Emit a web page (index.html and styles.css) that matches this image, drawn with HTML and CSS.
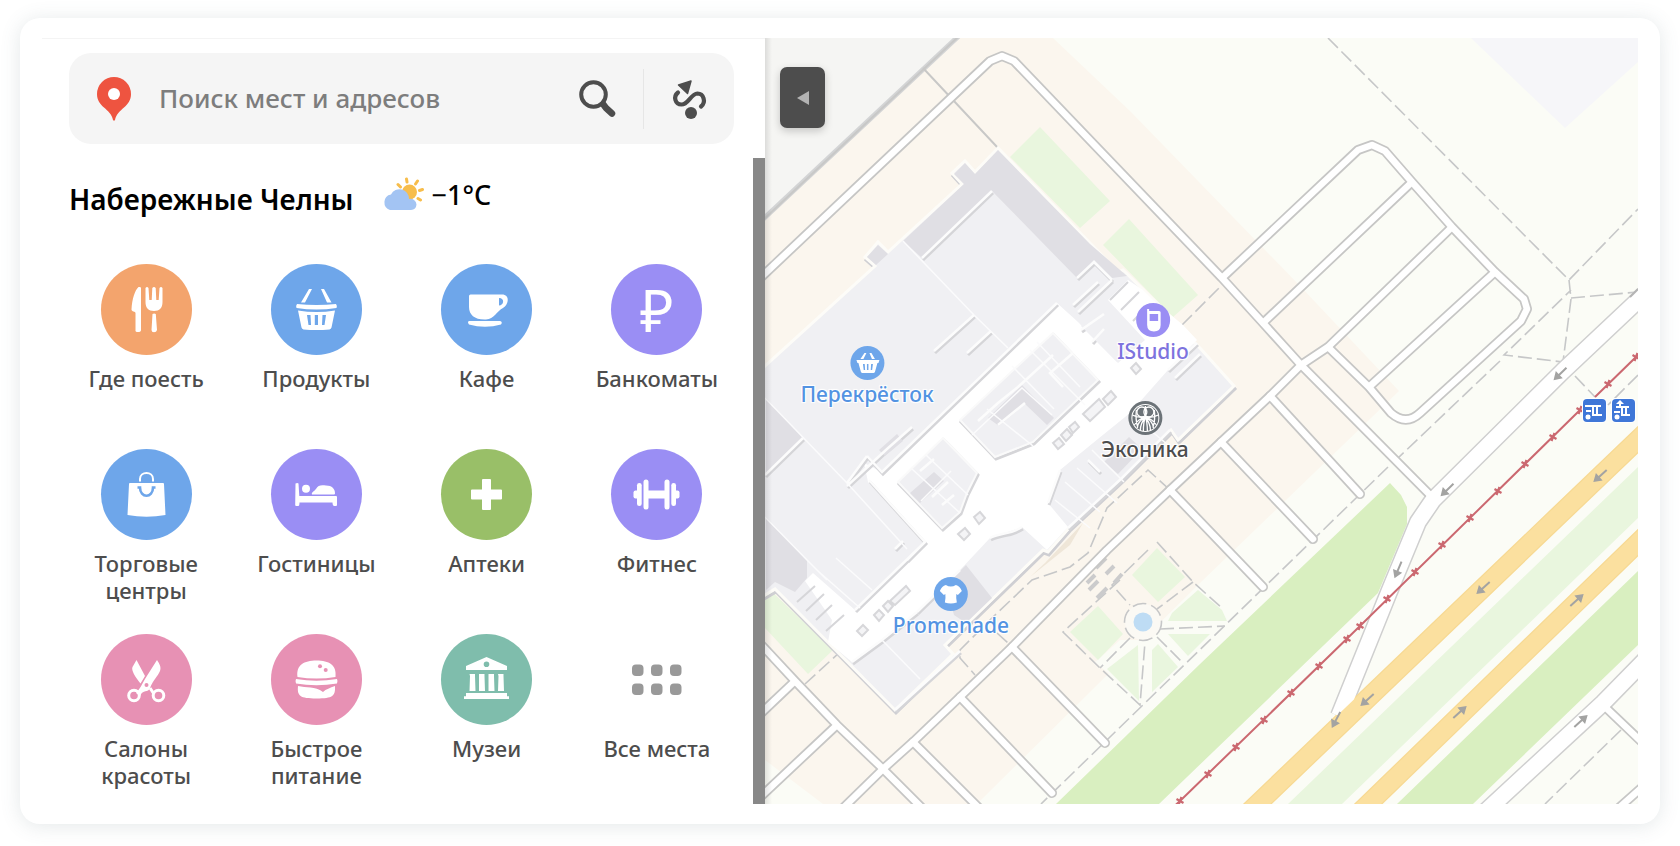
FILE: index.html
```html
<!DOCTYPE html>
<html lang="ru">
<head>
<meta charset="utf-8">
<meta name="viewport" content="width=device-width, initial-scale=1">
<title>Карты — Набережные Челны</title>
<link rel="stylesheet" href="styles.css">
</head>
<body>
<main class="card">
  <section class="sidebar">
    <form class="search" role="search">
      <svg class="search-pin" viewBox="0 0 34 44" aria-hidden="true"><path fill="#ee5440" d="M17 0a17 17 0 0 1 17 17c0 6-3 10-7 13.500-4 3.500-8 7-9 12.500q-1 1.500-2 0c-1-5.500-5-9-9-12.500C3 27 0 23 0 17A17 17 0 0 1 17 0z"/><circle cx="17" cy="17" r="6" fill="#fff"/></svg>
      <input class="search-input" type="text" placeholder="Поиск мест и адресов" aria-label="Поиск мест и адресов">
      <button class="icon-button" type="submit" aria-label="Найти"><svg width="38" height="38" viewBox="0 0 38 38"><circle cx="15.500" cy="14.500" r="12.300" fill="none" stroke="#4d4d4d" stroke-width="4"/><path d="M25 24l3 4 6 5.500" fill="none" stroke="#4d4d4d" stroke-width="6.500" stroke-linecap="round" stroke-linejoin="round"/></svg></button>
      <span class="search-divider"></span>
      <button class="icon-button" type="button" aria-label="Маршруты"><svg width="38" height="40" viewBox="0 0 38 40"><path fill="#4d4d4d" stroke="#4d4d4d" stroke-width="1.500" stroke-linejoin="round" d="M7.500 6L20 2l-3.500 12.500z"/><path fill="none" stroke="#4d4d4d" stroke-width="4.200" stroke-linecap="round" d="M7 13.500c-5 4-3 12 3.500 12 7 0 9-10.500 16-11 6 0 9 8.500 3.500 13"/><circle cx="20" cy="34" r="6" fill="#4d4d4d"/></svg></button>
    </form>
    <div class="browse">
      <div class="content">
        <header class="city">
          <h1 class="city-name">Набережные Челны</h1>
          <a class="weather" href="#weather"><svg width="42" height="34" viewBox="0 0 42 34" aria-hidden="true"><circle cx="27.500" cy="15" r="7.500" fill="#f7bd4b"/><path stroke="#f7bd4b" stroke-width="3" stroke-linecap="round" d="M24.500 2l.5 3M35.500 4l-2 3M16 7.500l2.500 2.500M40.500 12.500l-3 1M36 21.500l2.500 1.500"/><path fill="#a3c4f3" d="M8 33a8 8 0 0 1 1-15.500 9.500 9.500 0 0 1 18 4.500 6 6 0 0 1 7.500 5.500A6 6 0 0 1 29 33z"/></svg><span>−1°C</span></a>
        </header>
        <nav class="tiles" aria-label="Категории">
          <a class="tile" href="#food"><svg class="tile-icon orange" viewBox="0 0 91 91"><g fill="#fff"><path d="M40 24v42q0 2-3 2t-2.500-2V49c0-2-4-1-4-3.500C31 35 34 26 37.500 23q2.500-.5 2.500 1z"/><path d="M44.500 24q1.500-2 3 0l.8 12h2.400l.6-12q1.700-2 3.400 0l.6 12h2.400l.8-12q1.500-2 3 0V38c0 6-3 9-8.500 9s-8.500-3-8.500-9zM51.500 50q1.700-1 3.300 0L56 66q-.5 2.300-3 2.300T50.500 66z"/></g></svg><span>Где поесть</span></a>
          <a class="tile" href="#grocery"><svg class="tile-icon blue" viewBox="0 0 91 91"><path fill="#fff" fill-rule="evenodd" d="M38 25h3l-7 13.500h-4zM50 25h3l7.500 13.500H56zM26 40q19.500 2 39 0 1.500 2 .5 4-20 3-40 0-1-2 .5-4zM27 46.500q18.500 3 37 0l-3.500 17q-.5 1.500-2 2-13 1-26 0-1.500-.5-2-2zM36 51l1.500 10H40l-.5-10zM43.800 51v10H47V51zM51.500 51L51 61h2.500L55 51z"/></svg><span>Продукты</span></a>
          <a class="tile" href="#cafe"><svg class="tile-icon blue" viewBox="0 0 91 91"><path fill="#fff" fill-rule="evenodd" d="M28 32q0-1.500 1.500-1.500H61c8 0 7 10 1 13.500-6 3-9 11-17 11.500C34 56 28 51 28 43zM58 34v7.500c5 0 6-7.500 0-7.500zM28 57h31q3 1 1 3.500-16 4.500-32 0-2-2.500 0-3.500z"/></svg><span>Кафе</span></a>
          <a class="tile" href="#atm"><span class="tile-icon tile-sign purple" aria-hidden="true">₽</span><span>Банкоматы</span></a>
          <a class="tile" href="#malls"><svg class="tile-icon blue" viewBox="0 0 91 91"><path fill="#fff" d="M28 35q0-1 1-1h33q1 0 1 1l1.500 31q-19 3.500-38 0z"/><path fill="none" stroke="#fff" stroke-width="2" d="M39 32.500V30c0-8 13-8 13 0v2.500"/><path fill="none" stroke="#6ea6ea" stroke-width="2.600" d="M36.500 38.500H39c0 11 13 11 13 0h2.500"/></svg><span>Торговые центры</span></a>
          <a class="tile" href="#hotels"><svg class="tile-icon purple" viewBox="0 0 91 91"><g fill="#fff"><path d="M24.500 34.500q2-1 3 0l.8 12.500H65q1 0 1 1v8q0 1-1 1h-1.500q-2 0-2-3.500h-33c0 3-.5 3.500-2 3.500h-1.300q-1 0-1-1z"/><circle cx="35" cy="39.700" r="4"/><path d="M41 45.500c-1-2 2-3 4-5.500 2-4 5-4 10-3.500 6 0 9 3.500 9 8q0 1-1 1z"/></g></svg><span>Гостиницы</span></a>
          <a class="tile" href="#pharmacy"><svg class="tile-icon green" viewBox="0 0 91 91"><path fill="#fff" stroke="#fff" stroke-width="2" stroke-linejoin="round" d="M42 31h7v10.500h11v8H49V60h-7V49.500H31v-8h11z"/></svg><span>Аптеки</span></a>
          <a class="tile" href="#fitness"><svg class="tile-icon purple" viewBox="0 0 91 91"><g fill="#fff"><rect x="22.500" y="41.500" width="6" height="8" rx="2"/><rect x="62.500" y="41.500" width="6" height="8" rx="2"/><rect x="26" y="34" width="4.700" height="23" rx="2.300"/><rect x="60.300" y="34" width="4.700" height="23" rx="2.300"/><rect x="32.500" y="30.500" width="5" height="30" rx="2.500"/><rect x="53.500" y="30.500" width="5" height="30" rx="2.500"/><path d="M37 41.500h17v8H37z"/></g></svg><span>Фитнес</span></a>
          <a class="tile" href="#beauty"><svg class="tile-icon pink" viewBox="0 0 91 91"><path fill="#fff" d="M35.500 26L44 42l-4.500 7.500C34 43 30 36 31.500 33zM56 26c2.500 4 4.500 7 3 11-2 5-7 9-10 17-2 5-7 1-10 8l-4-3c4-4 6-9 9-14z"/><g fill="none" stroke="#fff" stroke-width="3"><circle cx="33" cy="61.500" r="5.300"/><circle cx="57.500" cy="61.500" r="5.300"/><path d="M49 54l4 6M42 54l-4 6"/></g><circle cx="45.500" cy="51" r="2" fill="#e791b4"/></svg><span>Салоны красоты</span></a>
          <a class="tile" href="#fastfood"><svg class="tile-icon pink" viewBox="0 0 91 91"><path fill="#fff" d="M26.500 43C25 31 33 26.500 45.500 26.500S66 31 64.500 43q-19 3-38 0zM25 45q20.500 3.500 41 0 1 2 0 4.500-20.500 3.500-41 0-1-2.500 0-4.500zM27 52c8 2 17 0 25 6 3-3 7-4 12-6 .5 10-2 12.500-18.500 12.500S26 62 27 52z"/><circle cx="49" cy="32.300" r="2" fill="#e791b4"/><circle cx="54.700" cy="36" r="2" fill="#e791b4"/></svg><span>Быстрое питание</span></a>
          <a class="tile" href="#museums"><svg class="tile-icon teal" viewBox="0 0 91 91"><path fill="#fff" fill-rule="evenodd" d="M45.500 23L66 32v4H25v-4zm0 4.500a2.800 2.800 0 1 0 0 5.600 2.800 2.800 0 0 0 0-5.600zM28.500 40H34v2l.5 15h-6l.5-15zM38 40h5.500v2l.5 15h-6V42zM47.500 40H53v2l.5 15h-6V42zM57 40h5.500v2l.5 15h-6l.5-15zM25 59h41v3.300h2V65H23v-2.700h2z"/></svg><span>Музеи</span></a>
          <a class="tile" href="#all"><svg class="tile-icon" viewBox="0 0 91 91"><g fill="#999"><rect x="21" y="30.500" width="11.500" height="11.500" rx="4"/><rect x="40" y="30.500" width="11.500" height="11.500" rx="4"/><rect x="59" y="30.500" width="11.500" height="11.500" rx="4"/><rect x="21" y="49.500" width="11.500" height="11.500" rx="4"/><rect x="40" y="49.500" width="11.500" height="11.500" rx="4"/><rect x="59" y="49.500" width="11.500" height="11.500" rx="4"/></g></svg><span>Все места</span></a>
        </nav>
      </div>
      <div class="scrollbar"></div>
    </div>
  </section>
  <section class="map" aria-label="Карта">
    <svg class="map-canvas" viewBox="765 38 873 766" preserveAspectRatio="xMinYMin slice" aria-hidden="true">
      <defs>
        <g id="roads" fill="none" stroke-linejoin="round">
          <path d="M755 283L990 61l12-5 12 5 208 217 41 45 38 42 131 132"/>
          <path d="M1222 278l136-128 14-5 13 6 27 31 40 45 43 45 29 27 3 10-6 12-101 92q-14 13-29 0l-22-26-41-40"/>
          <path d="M1263 323l149-141M1301 365l27-18 124-120M1369 387l126-115M1301 365l-31 31-49 46-51 48-63 60-95 97-52 50-47 45-30 27-46 45"/>
          <path d="M1270 396l90 98M1221 442l92 97M1170 490l93 97M1012 647l93 96M960 697l92 96M913 742l70 70" stroke-linecap="round"/>
          <path d="M755 638l40 43 42 44 46 44 45 45M795 681l-40 38M837 725l-82 77M1603 705l45 43M1612 814l36-32"/>
        </g>
        <path id="bigroad-west" fill="none" stroke-linejoin="round" d="M1648 291l-85 80-130 129-15 22-29 70-50 124"/>
        <path id="bigroad-east" fill="none" d="M1648 657l-45 46-119 110"/>
        <path id="building" d="M998 148l-23 24-10-11-13 12 10 11-74 68-10-10-13 15 10 9-120 109v226l20-12 120 121 58-56-8-9 98-95 5 2 21-24 54-50 48-48 7 10 56-54-34-38-30-29-12-15-35-34-5 2z"/>
        <g id="shops"><path d="M1053 333l45 47-65 62-38 15-35-37z"/><path d="M943 438l34 35-10 20-7 19-18 16-44-46z"/></g>
        <g id="walls" fill="none">
          <path d="M992 191l-70 67M1077 278l17-16 18 18M1112 280l-34 32M1057 303L882 472l-15-16M847 486l40-37 25-22M867 456l-20 27M903 541l-8 8M765 475l38-37M974 315l-40 36M991 331l-24 22M978 421l20-18 20-16 35-32M1063 387l-13-14 23-20M998 425l27-22M932 497l16-15M920 471l14-12M942 505l12-10M869 480l56 62-18 18M855 610l70-68M917 612l43-42M960 651l-65 59"/>
          <path d="M990 538c12-6 20-3 32-11M852 662l30-22 35-28M1060 470l-12 33M1100 472l-12-12M1073 305l25-23M1081 330l23-16M1092 342l12-13M1168 370l29-27M1175 378l25-24M1068 528l54-50 48-48"/>
        </g>
        <path id="tick" d="M-3.500-2L3.500 2M-1.500 4L1.500-4"/>
        <path id="arrow" d="M9-1H-1v-4l-8 5 8 5V1H9z"/>
      </defs>
      <path fill="#fbfcf6" d="M765 38h873v766H765z"/>
      <path fill="#fbf6ee" d="M765 38h288l78 74 170 175 98 104-199 192-223 221H823l-58-44z"/>
      <path fill="#f5f5f3" d="M765 38h192L765 218z"/>
      <path fill="#f6f6f9" d="M1471 38h167v24l-73 66z"/>
      <path fill="#d9efc0" d="M1390 483l11 12 6 12v17l-29 69-219 211h-103l144-140zM1638 571v74l-165 159h-76z"/>
      <path fill="#e9f6de" d="M1638 467v51l-296 286h-54zM1040 127l70 74-30 27-70-71zM1129 219l69 76-25 22-70-72zM765 585l68 65-25 24-43-46z"/>
      <path fill="#efe6d8" d="M1083 523l-13 22-40 32 15-14z"/>
      <path fill="#fbfcf6" d="M1095 662l25-22h40l70-35 5 15-90 85z"/>
      <path fill="#e9f6de" d="M1157 548l28 29-27 25-26-27zM1098 606l25 28-25 26-28-28zM1198 590l24 20 5 11h-59l4-8zM1168 634h42l-22 22zM1158 644l20 23-26 25v-42zM1138 645l1 56-32-32z"/>
      <circle cx="1143" cy="622" r="18" fill="#fbf9f4"/>
      <path stroke="#d3d4d5" stroke-width="5" d="M759 223L963 32"/>
      <path stroke="#c8c8c7" stroke-width="2" d="M923 68l75 80M763 220L959 36"/>
      <g class="paths">
        <path d="M1328 38l241 242 69-71M1569 280l2 19-8 63-59-7 67-65M1571 298l67-6M1575 376l20 21M1638 375l-30 30M1500 361l-103 98M1388 467L1041 804M1621 730l-76 74M1182 325l38-38"/>
        <path d="M1148 550l-36 35 18 20M1120 580l-57 52 37 36 40 37 5-63M1157 542l36 40 30 27M1193 582l-36 27M1160 629l65-3M1157 637l25 25M1130 638l-30 30M1170 490l-22-20-41 38-19 45-18 14-38 13-39 37-33 33v8l15 17M997 633l11 10M805 684l35-32"/>
        <circle cx="1143" cy="622" r="18.500"/>
      </g>
      <circle cx="1143" cy="622" r="9.500" fill="#bedcf4"/>
      <path stroke="#cbcbcc" stroke-width="4" d="M1078 577l9-9M1087 583l8-8M1089 590l9-9M1097 598l10-10M1106 574l8-8M1114 583l8-9M1096 568l10-10"/>

      <g stroke="#cfcfcf" stroke-width="18.500"><use href="#bigroad-west"/><use href="#bigroad-east"/></g>
      <path stroke="#f7d993" stroke-width="20" d="M1648 430l-400 383M1648 533l-289 280"/>
      <use href="#roads" stroke="#c6c6c5" stroke-width="10"/>
      <use href="#roads" stroke="#fff" stroke-width="6.500"/>
      <g stroke="#fff" stroke-width="15.500"><use href="#bigroad-west"/><use href="#bigroad-east"/></g>
      <path stroke="#fbe09f" stroke-width="17.500" d="M1648 430l-400 383M1648 533l-289 280"/>

      <use href="#building" fill="none" stroke="#cfcfd3" stroke-width="3" x="1" y="3"/>
      <use href="#building" fill="#f0f0f3" stroke="#fdfcf8" stroke-width="3"/>
      <path fill="#e0dfe4" d="M998 150l-23 24-10-11-11 11 10 10-61 57 19 17 70-67 85 87 17-18 18 18 15-2-37-32zM888 254l-10-9-11 12 9 8zM766 398l37 40-37 37zM766 517l41 43v18l-12 14-20-10-9 8z"/>
      <path fill="#fff" d="M1057 303L882 472l-18-9 4 19 57 60-70 68-42-37-8 8 27 39-4 22 24 20 30-22 35-28 43-42 30-32 32-11 25 23 21-23-20-24 12-33 33-27 37-30 38-43 29-30-14-15-30-25-10-10-15-10-20 20 37 40-27 23-40-41z"/>
      <g transform="translate(1 2)" stroke="#d5d5d8" stroke-width="3"><use href="#shops" fill="none"/><use href="#walls"/></g>
      <use href="#shops" fill="#f0f0f3" stroke="#fafafa" stroke-width="2"/>
      <path fill="#f0f0f3" d="M1104 306l-23 20 36 36 21-20z"/>
      <path fill="#e0dfe4" d="M988 418l34-33 32 33-7 7-22-21-26 22zM910 493l24-21 10 9-24 22zM879 450l18-16 6 7-18 15zM1104 462l25-25 13 12-24 25zM946 585l20-20 26 33-26 25-12-8z"/>
      <use href="#walls" stroke="#fcfcfc" stroke-width="2.500"/>
      <g fill="none" stroke="#fbfbfc" stroke-width="1.500">
        <path d="M903 241l71 74 34 33M765 398l82 85 60 66M765 517l42 43 20 20M1012 366l42 43M1030 350l55 55M1037 342l43 45M972 435l50-47 30 27M987 409l46 37M912 469l48 44M926 455l42 40M921 501l30-30M818 571l42 37M836 558l36 32M882 640l38 39M1065 482l35 30M1055 500l35 28M1077 468l40 35M1092 450l32 32M1130 413l38 32"/>
      </g>
      <g fill="#f4f4f6" stroke="#d7d7da" stroke-width="2">
        <path d="M1083 414l16-15 6 8-15 14zM1103 399l8-8 5 6-8 8zM1053 443l6-5 5 6-6 5zM1061 435l6-6 5 6-6 6zM1069 427l6-5 4 5-6 6zM974 517l6-5 5 6-6 6zM958 534l7-6 5 6-6 6zM890 601l16-15 4 5-15 14zM883 606l5-5 5 5-5 6zM874 615l5-5 5 5-5 6zM857 631l6-6 5 5-6 6zM1131 368l5-5 5 6-5 5z"/>
      </g>
      <g fill="none" stroke="#d6d6d9" stroke-width="2"><path d="M1110 300l18-18M1121 310l18-18M1133 321l17-17M797 602l18-16M806 611l18-17M816 620l16-15M826 631l18-16"/></g>

      <g fill="none" stroke="#cb6870">
        <path stroke-width="2" d="M1638 355l-43 42M1580 410l-220 216-180 175-10 9"/>
        <g stroke-width="2.200"><use href="#tick" x="1636" y="357"/><use href="#tick" x="1608" y="384"/><use href="#tick" x="1580" y="410"/><use href="#tick" x="1553" y="437"/><use href="#tick" x="1525" y="464"/><use href="#tick" x="1498" y="491"/><use href="#tick" x="1470" y="518"/><use href="#tick" x="1442" y="545"/><use href="#tick" x="1415" y="572"/><use href="#tick" x="1387" y="599"/><use href="#tick" x="1360" y="626"/><use href="#tick" x="1347" y="639"/><use href="#tick" x="1319" y="666"/><use href="#tick" x="1291" y="693"/><use href="#tick" x="1264" y="720"/><use href="#tick" x="1236" y="747"/><use href="#tick" x="1208" y="774"/><use href="#tick" x="1180" y="801"/></g>
      </g>
      <g fill="#a3a3a2">
        <use href="#arrow" transform="translate(1560 374) rotate(-44)"/><use href="#arrow" transform="translate(1447 490) rotate(-44)"/><use href="#arrow" transform="translate(1398 570) rotate(-67)"/><use href="#arrow" transform="translate(1336 720) rotate(-62)"/>
        <use href="#arrow" transform="translate(1600 476) rotate(-42)"/><use href="#arrow" transform="translate(1483 588) rotate(-42)"/><use href="#arrow" transform="translate(1367 700) rotate(-42)"/>
        <use href="#arrow" transform="translate(1577 600) rotate(138)"/><use href="#arrow" transform="translate(1460 712) rotate(138)"/><use href="#arrow" transform="translate(1581 721) rotate(138)"/>
      </g>
      <path fill="none" stroke="#b4b4b4" stroke-width="2" d="M1630 297l8-8"/>
      <g transform="translate(1583 399)"><rect x="-1" y="-1" width="25" height="25" rx="5" fill="#fff"/><rect width="23" height="23" rx="4" fill="#3f77d8"/><path fill="none" stroke="#fff" stroke-width="2" d="M2 7h16M3 12h5M3 17h4M10 7v9h7M14 7v9M17 16h2"/><circle cx="5" cy="18" r="2.500" fill="#fff"/></g>
      <g transform="translate(1612 399)"><rect x="-1" y="-1" width="25" height="25" rx="5" fill="#fff"/><rect width="23" height="23" rx="4" fill="#3f77d8"/><path fill="none" stroke="#fff" stroke-width="2" d="M4 8h13M2 13h6M10 9v7h8M14 9v7M8 3v6"/><path fill="#fff" d="M8 1l4 4H4z"/><circle cx="5" cy="18" r="2.500" fill="#fff"/></g>
    </svg>
    <button class="collapse" type="button" aria-label="Свернуть панель"><svg width="12" height="14" viewBox="0 0 12 14"><path fill="#b3b3b3" d="M12 0v14L0 7z"/></svg></button>
    <a class="pin pin-market" href="#p1"><svg class="pin-icon blue" viewBox="0 0 34 34"><path fill="#fff" fill-rule="evenodd" d="M14 7h2l-3 6h-3zM19 7h2l3.500 6h-3zM6 14h23l-1 3h-1l-2.500 9q-.5 1-1.500 1H12q-1 0-1.500-1L8 17H7zM12.500 18l.8 6h1.400l-.4-6zM16.500 18v6h1.500v-6zM20.700 18l-.4 6h1.400l.8-6z"/></svg><span>Перекрёсток</span></a>
    <a class="pin pin-studio" href="#p2"><svg class="pin-icon purple" viewBox="0 0 34 34"><path fill="#fff" fill-rule="evenodd" d="M11 6h2v2h10q1.500 0 1.500 1.500V22q0 6.500-6.700 6.500T11 22zm2.500 5v7h8.500v-7z"/></svg><span>IStudio</span></a>
    <a class="pin pin-econika" href="#p3"><svg class="pin-icon slate" viewBox="0 0 34 34"><circle cx="17" cy="17" r="14" fill="#fff"/><circle cx="17" cy="17" r="13" fill="#6c7378"/><g fill="none" stroke="#fff" stroke-width="1.300"><circle cx="13.500" cy="11" r="5"/><circle cx="20.500" cy="11" r="5"/><path d="M17 5v12M17 16c-5 3-8 7-8 11M17 16c-3 4-5 8-5 13M17 16c-2 5-2 9-2 14M17 16c5 3 8 7 8 11M17 16c3 4 5 8 5 13M17 16c2 5 2 9 2 14M17 16Q9 17 4 14M17 16q-7 2-11 8M17 16q8 1 13-2M17 16q7 2 11 8M8 9q-1 9 1 16M26 9q1 9-1 16"/></g></svg><span>Эконика</span></a>
    <a class="pin pin-promenade" href="#p4"><svg class="pin-icon blue" viewBox="0 0 34 34"><path fill="#fff" d="M12 8q5 3 10 0 4 1 6 6l-4 4-1.500-1q-.5 4 .5 8.500-6 2-12 0 1-4.500.5-8.500L10 18l-4-4q2-5 6-6z"/></svg><span>Promenade</span></a>
  </section>
</main>
</body>
</html>
```
FILE: styles.css
```css
* {
  box-sizing: border-box;
}

body {
  display: flex;
  min-height: 100vh;
  margin: 0;
  padding: 18px 20px 22px;
  background: #fff;
  color: #4d4d4d;
  font-family: "Noto Sans", "Open Sans", sans-serif;
  font-weight: 500;
}

a {
  color: inherit;
  text-decoration: none;
}

button {
  padding: 0;
  border: 0;
  background: none;
  cursor: pointer;
}

.card {
  display: flex;
  flex: 1;
  padding: 20px 22px 20px;
  border-radius: 20px;
  background: #fff;
  box-shadow: 0 2px 20px rgba(90, 110, 120, 0.16);
}

.sidebar {
  display: flex;
  flex: 0 0 723px;
  flex-direction: column;
  border-top: 1px solid #f4f4f4;
}

.search {
  display: flex;
  align-items: center;
  height: 91px;
  margin: 14px 31px 14px 27px;
  padding: 0 25px 0 28px;
  border-radius: 22px;
  background: #f5f5f5;
}

.search-pin {
  flex: none;
  width: 34px;
  height: 44px;
  margin-right: 28px;
}

.search-input {
  flex: 1;
  min-width: 0;
  padding: 0 0 2px;
  border: 0;
  outline: 0;
  background: none;
  color: #4d4d4d;
  font: inherit;
  font-size: 26px;
}

.search-input::placeholder {
  color: #7d7d7d;
  opacity: 1;
}

.icon-button {
  display: flex;
}

.search-divider {
  width: 1px;
  height: 60px;
  margin: 0 27px;
  background: #e6e6e6;
}

.browse {
  display: flex;
  flex: 1;
}

.content {
  flex: 1;
  padding: 16px 11px 0 19px;
}

.city {
  display: flex;
  gap: 28px;
  padding-left: 8px;
}

.city-name {
  margin: 5px 0 0;
  color: #000;
  font-size: 28px;
  font-weight: 600;
  line-height: 40px;
}

.weather {
  display: flex;
  align-items: center;
  height: 40px;
  gap: 8px;
  color: #000;
  font-size: 27px;
}

.tiles {
  display: grid;
  grid-template-columns: repeat(4, 1fr);
  gap: 30px 0;
  padding-top: 45px;
}

.tile {
  display: flex;
  flex-direction: column;
  align-items: center;
  gap: 10px;
  min-height: 155px;
  padding: 0 20px;
  font-size: 22px;
  line-height: 27px;
  text-align: center;
}

.tile-icon {
  display: block;
  flex: none;
  width: 91px;
  height: 91px;
  border-radius: 50%;
}

.tile-sign {
  color: #fff;
  font-size: 58px;
  font-weight: 400;
  line-height: 91px;
}

.orange { background: #f3a46d; }
.blue { background: #6ea6ea; }
.purple { background: #9a8ef4; }
.green { background: #99bf68; }
.pink { background: #e791b4; }
.teal { background: #7fbdac; }
.slate { background: #6c7378; }

.scrollbar {
  width: 12px;
  background: #888;
}

.map {
  position: relative;
  flex: 1;
  overflow: hidden;
  background: #fbfcf6;
}

.map::after {
  content: "";
  position: absolute;
  inset: 0 auto 0 0;
  width: 7px;
  background: linear-gradient(90deg, rgba(0, 0, 0, 0.1), rgba(0, 0, 0, 0));
}

.map-canvas {
  position: absolute;
  width: 100%;
  height: 100%;
}

.paths {
  fill: none;
  stroke: #c6c7c8;
  stroke-width: 1.6;
  stroke-dasharray: 14 5;
}

.collapse {
  position: absolute;
  top: 29px;
  left: 15px;
  display: flex;
  align-items: center;
  justify-content: center;
  width: 45px;
  height: 61px;
  border-radius: 7px;
  background: #4d4d4d;
  box-shadow: 0 3px 8px rgba(0, 0, 0, 0.2);
}

.pin {
  position: absolute;
  display: flex;
  flex-direction: column;
  align-items: center;
  gap: 2px;
  color: #5393e2;
  font-size: 21px;
  line-height: 24px;
  text-shadow: 0 0 2px #fff, 1px 1px 1px #fff, -1px -1px 1px #fff, 1px -1px 1px #fff, -1px 1px 1px #fff;
  transform: translateX(-50%);
}

.pin-icon {
  width: 34px;
  height: 34px;
  border-radius: 50%;
}

.pin-market { top: 308px; left: 102px; }
.pin-studio { top: 265px; left: 388px; color: #7d73de; }
.pin-econika { top: 363px; left: 380px; color: #4d4d4d; }
.pin-promenade { top: 539px; left: 186px; }
```
